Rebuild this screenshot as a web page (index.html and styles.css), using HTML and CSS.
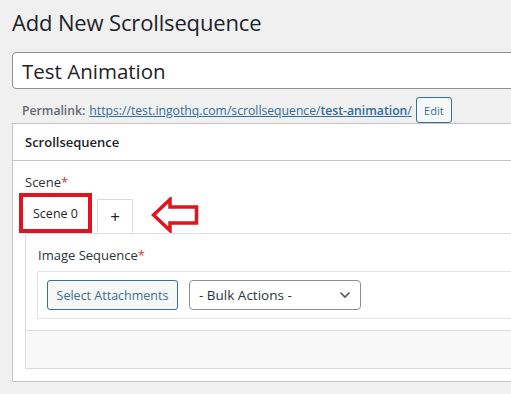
FILE: index.html
```html
<!DOCTYPE html>
<html lang="en">
<head>
    <meta charset="UTF-8">
    <meta name="viewport" content="width=device-width, initial-scale=1.0">
    <title>Add New Scrollsequence</title>
    <link rel="stylesheet" href="styles.css">
</head>
<body>
    <div class="wrap">
        <h1>Add New Scrollsequence</h1>

        <input type="text" class="title-input" value="Test Animation">

        <div class="permalink">
            <strong>Permalink:</strong>
            <a href="#">https://test.ingothq.com/scrollsequence/<b>test-animation</b>/</a>
            <button class="btn-small">Edit</button>
        </div>

        <div class="postbox">
            <div class="postbox-header">Scrollsequence</div>
            <div class="postbox-body">
                <div class="field-label">Scene<span class="req">*</span></div>

                <div class="tabs">
                    <div class="tab tab-active">Scene 0</div>
                    <div class="tab tab-add">+</div>
                    <svg class="arrow" width="48" height="36" viewBox="0 0 48 36">
                        <polygon points="2.5,18 19,2.5 19,10 45.5,10 45.5,26 19,26 19,33.5" fill="none" stroke="#e0141e" stroke-width="3.5" stroke-linejoin="miter"/>
                    </svg>
                </div>

                <div class="scene-panel">
                    <div class="scene-content">
                        <div class="field-label">Image Sequence<span class="req">*</span></div>
                        <div class="attach-box">
                            <button class="btn-secondary">Select Attachments</button>
                            <div class="select">
                                <span>- Bulk Actions -</span>
                                <svg width="12" height="8" viewBox="0 0 12 8">
                                    <path d="M1.5 1.5 L6 6 L10.5 1.5" fill="none" stroke="#50575e" stroke-width="1.6"/>
                                </svg>
                            </div>
                        </div>
                    </div>
                    <div class="scene-footer"></div>
                </div>
            </div>
        </div>
    </div>
</body>
</html>
```

FILE: styles.css
```css
html, body {
    margin: 0;
    padding: 0;
    background: #f0f0f1;
    overflow: hidden;
}
body {
    font-family: "Open Sans", "Noto Sans", sans-serif;
    color: #1d2327;
    font-size: 13px;
}
.wrap {
    width: 560px;
    padding-left: 12px;
}
h1 {
    margin: 0;
    padding: 7px 0 0 0;
    font-size: 22px;
    font-weight: 400;
    line-height: 30px;
    letter-spacing: -0.15px;
    color: #1d2327;
}
.title-input {
    display: block;
    box-sizing: border-box;
    width: 100%;
    height: 37px;
    margin-top: 15px;
    padding: 0 9px;
    border: 1px solid #8c8f94;
    border-radius: 4px;
    background: #fff;
    font-family: inherit;
    font-size: 20.5px;
    color: #1d2327;
}
.permalink {
    box-sizing: border-box;
    display: flex;
    align-items: center;
    height: 34px;
    padding: 8px 0 0 10px;
    color: #646970;
    font-size: 12.2px;
    white-space: nowrap;
}
.permalink strong {
    font-weight: 600;
    margin-right: 4px;
}
.permalink a {
    color: #2e6d99;
    text-decoration: underline;
}
.permalink a b {
    font-weight: 600;
}
.btn-small {
    margin-left: 4px;
    height: 26px;
    width: 36px;
    padding: 0;
    border: 1px solid #3b6f93;
    border-radius: 3px;
    background: #f6f7f7;
    color: #3b6f93;
    font-family: inherit;
    font-size: 11px;
}
.postbox {
    border: 1px solid #c3c4c7;
    background: #fff;
}
.postbox-header {
    height: 36px;
    line-height: 36px;
    padding-left: 12px;
    border-bottom: 1px solid #c3c4c7;
    font-size: 13px;
    font-weight: 600;
}
.postbox-body {
    padding: 11px 12px 12px 12px;
}
.field-label {
    font-size: 13px;
    font-weight: 500;
    line-height: 20px;
    color: #2c3338;
}
.req {
    color: #d63638;
}
.tabs {
    display: flex;
    align-items: flex-end;
    margin-top: 1px;
}
.tab {
    box-sizing: border-box;
    display: flex;
    align-items: center;
    justify-content: center;
    background: #fff;
}
.tab-active {
    width: 73px;
    height: 40px;
    margin-left: -6px;
    border: 4px solid #e0141e;
    font-size: 12.5px;
    color: #1d2327;
}
.tab-add {
    width: 36px;
    height: 34px;
    margin-left: 5px;
    border: 1px solid #dcdcde;
    border-bottom: none;
    font-size: 17px;
    color: #1d2327;
}
.arrow {
    display: block;
    margin-left: 18px;
}
.scene-panel {
    border: 1px solid #dcdcde;
}
.scene-content {
    padding: 11px 0 11px 12px;
}
.attach-box {
    display: flex;
    align-items: center;
    gap: 11px;
    margin-top: 6px;
    margin-left: -1px;
    padding: 8px 9px;
    border: 1px solid #e4e4e6;
}
.btn-secondary {
    box-sizing: border-box;
    width: 131px;
    height: 30px;
    padding: 0;
    border: 1px solid #3b6f93;
    border-radius: 3px;
    background: #f6f7f7;
    color: #3b6f93;
    font-family: inherit;
    font-size: 12.5px;
}
.select {
    box-sizing: border-box;
    display: flex;
    align-items: center;
    justify-content: space-between;
    width: 172px;
    height: 30px;
    padding: 0 9px 0 9px;
    border: 1px solid #8c8f94;
    border-radius: 4px;
    background: #fff;
    font-size: 13.5px;
    color: #2c3338;
}
.scene-footer {
    height: 37px;
    border-top: 1px solid #dcdcde;
    background: #f8f8f8;
}
```
